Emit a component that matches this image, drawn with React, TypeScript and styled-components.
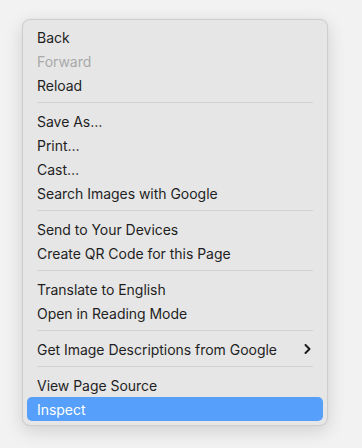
import { FC } from 'react';
import styled, { createGlobalStyle } from 'styled-components';

const GlobalStyle = createGlobalStyle`
  html, body {
    margin: 0;
    padding: 0;
    background: #f2f2f2;
  }

  body {
    font-family: Inter, 'Noto Sans', 'Liberation Sans', sans-serif;
    -webkit-font-smoothing: antialiased;
  }
`;

const Page = styled.div`
  width: 362px;
  height: 448px;
  padding: 19px 0 0 22px;
  box-sizing: border-box;
`;

const Menu = styled.ul`
  list-style: none;
  margin: 0;
  width: 306px;
  box-sizing: border-box;
  padding: 5px 4px 4px;
  background: #e6e6e6;
  border: 1px solid #cecece;
  border-radius: 8px;
  box-shadow: 0 5px 18px rgba(0, 0, 0, 0.14), 0 0 2px rgba(0, 0, 0, 0.06);
`;

const Item = styled.li<{ $disabled?: boolean; $active?: boolean }>`
  display: flex;
  align-items: center;
  justify-content: space-between;
  height: 24px;
  padding: 0 12px 0 10px;
  border-radius: 5px;
  font-size: 14px;
  letter-spacing: -0.03px;
  color: ${props =>
    props.$active ? '#ffffff' : props.$disabled ? '#a9a9a9' : '#1f1f1f'};
  background: ${props => (props.$active ? '#569ffb' : 'transparent')};
`;

const Separator = styled.li`
  height: 1px;
  margin: 5px 10px 6px;
  background: #d2d2d2;
`;

const Chevron = () => (
  <svg width="7" height="10" viewBox="0 0 7 10" fill="none">
    <path
      d="M1.5 1 L5.5 5 L1.5 9"
      stroke="#1a1a1a"
      strokeWidth="1.9"
      strokeLinecap="round"
      strokeLinejoin="round"
    />
  </svg>
);

type Entry =
  | { label: string; disabled?: boolean; submenu?: boolean; active?: boolean }
  | 'sep';

const entries: Entry[] = [
  { label: 'Back' },
  { label: 'Forward', disabled: true },
  { label: 'Reload' },
  'sep',
  { label: 'Save As…' },
  { label: 'Print…' },
  { label: 'Cast…' },
  { label: 'Search Images with Google' },
  'sep',
  { label: 'Send to Your Devices' },
  { label: 'Create QR Code for this Page' },
  'sep',
  { label: 'Translate to English' },
  { label: 'Open in Reading Mode' },
  'sep',
  { label: 'Get Image Descriptions from Google', submenu: true },
  'sep',
  { label: 'View Page Source' },
  { label: 'Inspect', active: true },
];

const App: FC = () => (
  <>
    <GlobalStyle />
    <Page>
      <Menu>
        {entries.map((entry, index) =>
          entry === 'sep' ? (
            <Separator key={index} />
          ) : (
            <Item
              key={entry.label}
              $disabled={entry.disabled}
              $active={entry.active}
            >
              <span>{entry.label}</span>
              {entry.submenu && <Chevron />}
            </Item>
          )
        )}
      </Menu>
    </Page>
  </>
);

export default App;
